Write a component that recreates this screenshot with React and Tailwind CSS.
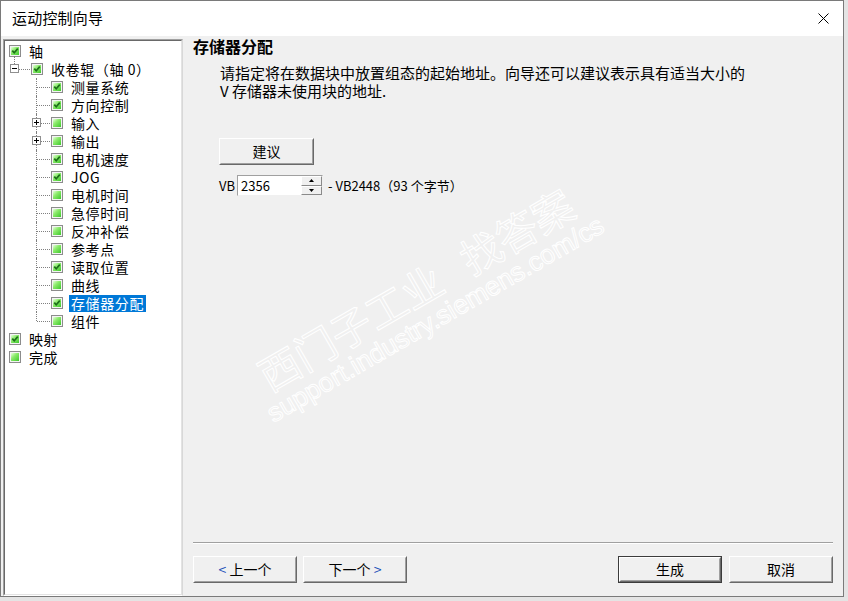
import React from "react";

const FONT = { fontFamily: '"Noto Sans CJK SC", "Noto Sans", sans-serif' };

function Check({ checked }) {
  return (
    <span className="flex h-[12px] w-[12px] shrink-0 border border-[#8c8c8c] bg-[#f4f4f4] p-[1px]">
      <span className="relative flex-1 bg-[linear-gradient(135deg,#e8ffe0_0%,#8ceb6c_40%,#3ec82c_100%)]">
        {checked && (
          <svg viewBox="0 0 8 8" className="absolute inset-0 h-full w-full">
            <path d="M1.3 3.6 L3.2 5.8 L6.8 1.6" stroke="#1d6f1a" strokeWidth="1.7" fill="none" />
          </svg>
        )}
      </span>
    </span>
  );
}

function Expander({ sign }) {
  return (
    <span className="flex h-[9px] w-[9px] items-center justify-center border border-[#8f8f8f] bg-white">
      <svg viewBox="0 0 7 7" className="h-[7px] w-[7px]">
        <path d="M1 3.5 H6" stroke="#000" strokeWidth="1" />
        {sign === "+" && <path d="M3.5 1 V6" stroke="#000" strokeWidth="1" />}
      </svg>
    </span>
  );
}

const rows = [
  { lv: 0, label: "轴", c: true },
  { lv: 1, label: "收卷辊（轴 0）", c: true, exp: "-" },
  { lv: 2, label: "测量系统", c: true },
  { lv: 2, label: "方向控制", c: true },
  { lv: 2, label: "输入", c: false, exp: "+" },
  { lv: 2, label: "输出", c: false, exp: "+" },
  { lv: 2, label: "电机速度", c: true },
  { lv: 2, label: "JOG", c: true },
  { lv: 2, label: "电机时间", c: false },
  { lv: 2, label: "急停时间", c: false },
  { lv: 2, label: "反冲补偿", c: false },
  { lv: 2, label: "参考点", c: false },
  { lv: 2, label: "读取位置", c: true },
  { lv: 2, label: "曲线", c: false },
  { lv: 2, label: "存储器分配", c: true, sel: true },
  { lv: 2, label: "组件", c: false, last: true },
  { lv: 0, label: "映射", c: true },
  { lv: 0, label: "完成", c: false },
];

function Label({ text, sel }) {
  return (
    <span
      className={
        "ml-[6px] flex h-[17px] items-center px-[2px] text-[14px] leading-[17px] tracking-[0.6px] " +
        (sel ? "bg-[#0078d7] text-white" : "text-black")
      }
    >
      {text}
    </span>
  );
}

function TreeRow({ r }) {
  if (r.lv === 0) {
    return (
      <div className="flex h-[18px] items-center pl-[4px]">
        <Check checked={r.c} />
        <Label text={r.label} sel={r.sel} />
      </div>
    );
  }
  if (r.lv === 1) {
    return (
      <div className="flex h-[18px] items-center pl-[4px]">
        <span className="relative h-[18px] w-[22px]">
          <span className="absolute left-[5px] top-[-4px] h-[8px] border-l border-dotted border-[#808080]" />
          <span className="absolute left-[6px] right-[1px] top-[9px] border-t border-dotted border-[#808080]" />
          <span className="absolute left-[1px] top-[4px]">
            <Expander sign={r.exp} />
          </span>
        </span>
        <Check checked={r.c} />
        <Label text={r.label} sel={r.sel} />
      </div>
    );
  }
  return (
    <div className="flex h-[18px] items-center pl-[31px]">
      <span className="relative h-[18px] w-[15px]">
        <span
          className={
            "absolute left-0 top-0 border-l border-dotted border-[#808080] " +
            (r.last ? "h-[9px]" : "h-[18px]")
          }
        />
        <span className="absolute left-[1px] right-[1px] top-[9px] border-t border-dotted border-[#808080]" />
        {r.exp && (
          <span className="absolute left-[-4px] top-[4px]">
            <Expander sign={r.exp} />
          </span>
        )}
      </span>
      <Check checked={r.c} />
      <Label text={r.label} sel={r.sel} />
    </div>
  );
}

function Btn({ children, def, className = "" }) {
  return (
    <div className={"flex h-[27px] " + (def ? "border border-[#3c3c3c] " : "") + className}>
      <div className="flex flex-1 border border-b-[#696969] border-l-[#ffffff] border-r-[#696969] border-t-[#ffffff]">
        <div className="flex flex-1 items-center justify-center border border-b-[#a0a0a0] border-l-[#f0f0f0] border-r-[#a0a0a0] border-t-[#f0f0f0] bg-[#f0f0f0] text-[14px] text-black">
          {children}
        </div>
      </div>
    </div>
  );
}

export default function App() {
  return (
    <div className="relative h-[601px] w-[848px] overflow-hidden bg-[#e4e4e4]" style={FONT}>
      <div className="flex h-[597px] w-[844px] flex-col border border-[#7a7a7a] bg-[#f0f0f0]">
        {/* Title bar */}
        <div className="flex h-[35px] shrink-0 items-center justify-between bg-white pl-[11px] pr-[14px]">
          <span className="text-[15px] tracking-[0.2px] text-black">运动控制向导</span>
          <svg viewBox="0 0 11 11" className="h-[11px] w-[11px]">
            <path d="M0.5 0.5 L10.5 10.5 M10.5 0.5 L0.5 10.5" stroke="#000" strokeWidth="1" />
          </svg>
        </div>

        {/* Body */}
        <div className="flex min-h-0 flex-1">
          {/* Tree */}
          <div className="ml-[2px] mt-[3px] flex w-[180px] shrink-0 border border-b-[#ffffff] border-l-[#a0a0a0] border-r-[#d8d8d8] border-t-[#a0a0a0]">
            <div className="flex flex-1 flex-col border border-b-[#e3e3e3] border-l-[#696969] border-r-[#e3e3e3] border-t-[#696969] bg-white pt-[1px]">
              {rows.map((r, i) => (
                <TreeRow key={i} r={r} />
              ))}
            </div>
          </div>

          {/* Content */}
          <div className="flex min-w-0 flex-1 flex-col pb-[13px] pl-[10px] pr-[10px]">
            <div className="pt-[1px] text-[16px] font-bold leading-[18px] text-black">存储器分配</div>
            <div className="ml-[27px] mt-[9px] text-[15px] leading-[18px] text-black">
              <div>请指定将在数据块中放置组态的起始地址。向导还可以建议表示具有适当大小的</div>
              <div>V 存储器未使用块的地址.</div>
            </div>
            <div className="ml-[26px] mt-[38px]">
              <Btn className="w-[95px]">建议</Btn>
            </div>
            <div className="ml-[26px] mt-[10px] flex h-[21px] items-center text-[13px] text-black">
              <span className="w-[18px]">VB</span>
              <div className="flex h-[21px] border border-b-[#f0f0f0] border-l-[#a0a0a0] border-r-[#f0f0f0] border-t-[#a0a0a0]">
                <div className="flex w-[63px] items-center bg-white pl-[3px] text-[13px]">2356</div>
                <div className="flex w-[21px] flex-col">
                  <div className="flex flex-1 items-center justify-center border border-b-[#8a8a8a] border-l-white border-r-[#8a8a8a] border-t-white bg-[#f0f0f0]">
                    <svg viewBox="0 0 5 3" className="h-[3px] w-[5px]"><path d="M2.5 0 L5 3 L0 3 Z" fill="#000" /></svg>
                  </div>
                  <div className="flex flex-1 items-center justify-center border border-b-[#8a8a8a] border-l-white border-r-[#8a8a8a] border-t-white bg-[#f0f0f0]">
                    <svg viewBox="0 0 5 3" className="h-[3px] w-[5px]"><path d="M0 0 L5 0 L2.5 3 Z" fill="#000" /></svg>
                  </div>
                </div>
              </div>
              <span className="ml-[5px]">- VB2448（93 个字节）</span>
            </div>

            <div className="flex-1" />

            <div className="border-b border-t border-b-white border-t-[#a0a0a0]" />
            <div className="mt-[12px] flex items-center">
              <Btn className="mr-[6px] w-[104px]">
                <span className="text-[#1a4fb8]">&lt;</span>&nbsp;上一个
              </Btn>
              <Btn className="w-[104px]">
                下一个&nbsp;<span className="text-[#1a4fb8]">&gt;</span>
              </Btn>
              <div className="flex-1" />
              <Btn def className="mr-[7px] w-[104px]">生成</Btn>
              <Btn className="w-[104px]">取消</Btn>
            </div>
          </div>
        </div>
      </div>

      {/* Watermark */}
      <div className="pointer-events-none absolute left-[250px] top-[358px] origin-top-left rotate-[-30deg] select-none">
        <div
          className="whitespace-pre text-[41px] leading-[44px] text-transparent [-webkit-text-stroke:1px_#ffffff]"
          style={FONT}
        >
          西门子工业   找答案
        </div>
        <div
          className="-ml-[12px] mt-0 whitespace-pre text-[26.5px] leading-[30px] text-transparent [-webkit-text-stroke:1px_#ffffff]"
          style={{ fontFamily: '"Liberation Sans", Arial, sans-serif' }}
        >
          support.industry.siemens.com/cs
        </div>
      </div>
    </div>
  );
}
